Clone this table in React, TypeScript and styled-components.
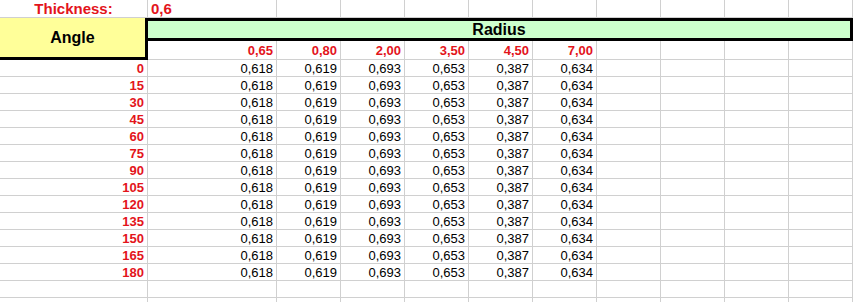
import React from 'react';
import styled, { createGlobalStyle } from 'styled-components';

const GlobalStyle = createGlobalStyle`
    html, body {
        margin: 0;
        padding: 0;
        background: #ffffff;
        overflow: hidden;
    }
    body {
        font-family: "Liberation Sans", Arial, sans-serif;
    }
`;

const GRID = '#d0d0d0';
const RED = '#e3141b';
const EXTRA_COLS = 4;

const angles = [0, 15, 30, 45, 60, 75, 90, 105, 120, 135, 150, 165, 180];
const radii = ['0,65', '0,80', '2,00', '3,50', '4,50', '7,00'];
const values = ['0,618', '0,619', '0,693', '0,653', '0,387', '0,634'];

const Sheet = styled.div`
    display: grid;
    grid-template-columns: 148px 129px repeat(9, 64px);
    grid-template-rows: 18px 23px 19px repeat(15, 17px);
    width: 853px;
    height: 302px;
    overflow: hidden;
`;

const Cell = styled.div<{ $align?: 'left' | 'right' | 'center'; $red?: boolean; $bold?: boolean; $size?: number }>`
    display: flex;
    align-items: center;
    justify-content: ${p => (p.$align === 'right' ? 'flex-end' : p.$align === 'center' ? 'center' : 'flex-start')};
    padding: 0 3px 0 3px;
    border-right: 1px solid ${GRID};
    border-bottom: 1px solid ${GRID};
    font-size: ${p => p.$size ?? 13}px;
    font-weight: ${p => (p.$bold ? 700 : 400)};
    color: ${p => (p.$red ? RED : '#000')};
    white-space: nowrap;
    overflow: hidden;
`;

const AngleHeader = styled.div`
    grid-column: 1;
    grid-row: 2 / span 2;
    display: flex;
    align-items: center;
    justify-content: center;
    background: #ffff99;
    border-right: 3px solid #000;
    border-bottom: 3px solid #000;
    font-size: 16px;
    font-weight: 700;
    padding-top: 1px;
`;

const RadiusHeader = styled.div`
    grid-column: 2 / -1;
    grid-row: 2;
    display: flex;
    align-items: center;
    justify-content: center;
    background: #ccffcc;
    border: 3px solid #000;
    border-left: none;
    font-size: 16px;
    font-weight: 700;
`;

const Blanks = ({ count }: { count: number }) => (
    <>
        {Array.from({ length: count }, (_, i) => (
            <Cell key={i} />
        ))}
    </>
);

export default function App() {
    return (
        <>
            <GlobalStyle />
            <Sheet>
                {/* row 1 */}
                <Cell $align="center" $red $bold $size={15}>Thickness:</Cell>
                <Cell $red $bold $size={15}>0,6</Cell>
                <Blanks count={9} />

                {/* rows 2-3 */}
                <AngleHeader>Angle</AngleHeader>
                <RadiusHeader>Radius</RadiusHeader>
                {radii.map(r => (
                    <Cell key={r} $align="right" $red $bold>{r}</Cell>
                ))}
                <Blanks count={EXTRA_COLS} />

                {/* data */}
                {angles.map(a => (
                    <React.Fragment key={a}>
                        <Cell $align="right" $red $bold>{a}</Cell>
                        {values.map((v, i) => (
                            <Cell key={i} $align="right">{v}</Cell>
                        ))}
                        <Blanks count={EXTRA_COLS} />
                    </React.Fragment>
                ))}

                <Blanks count={22} />
            </Sheet>
        </>
    );
}
